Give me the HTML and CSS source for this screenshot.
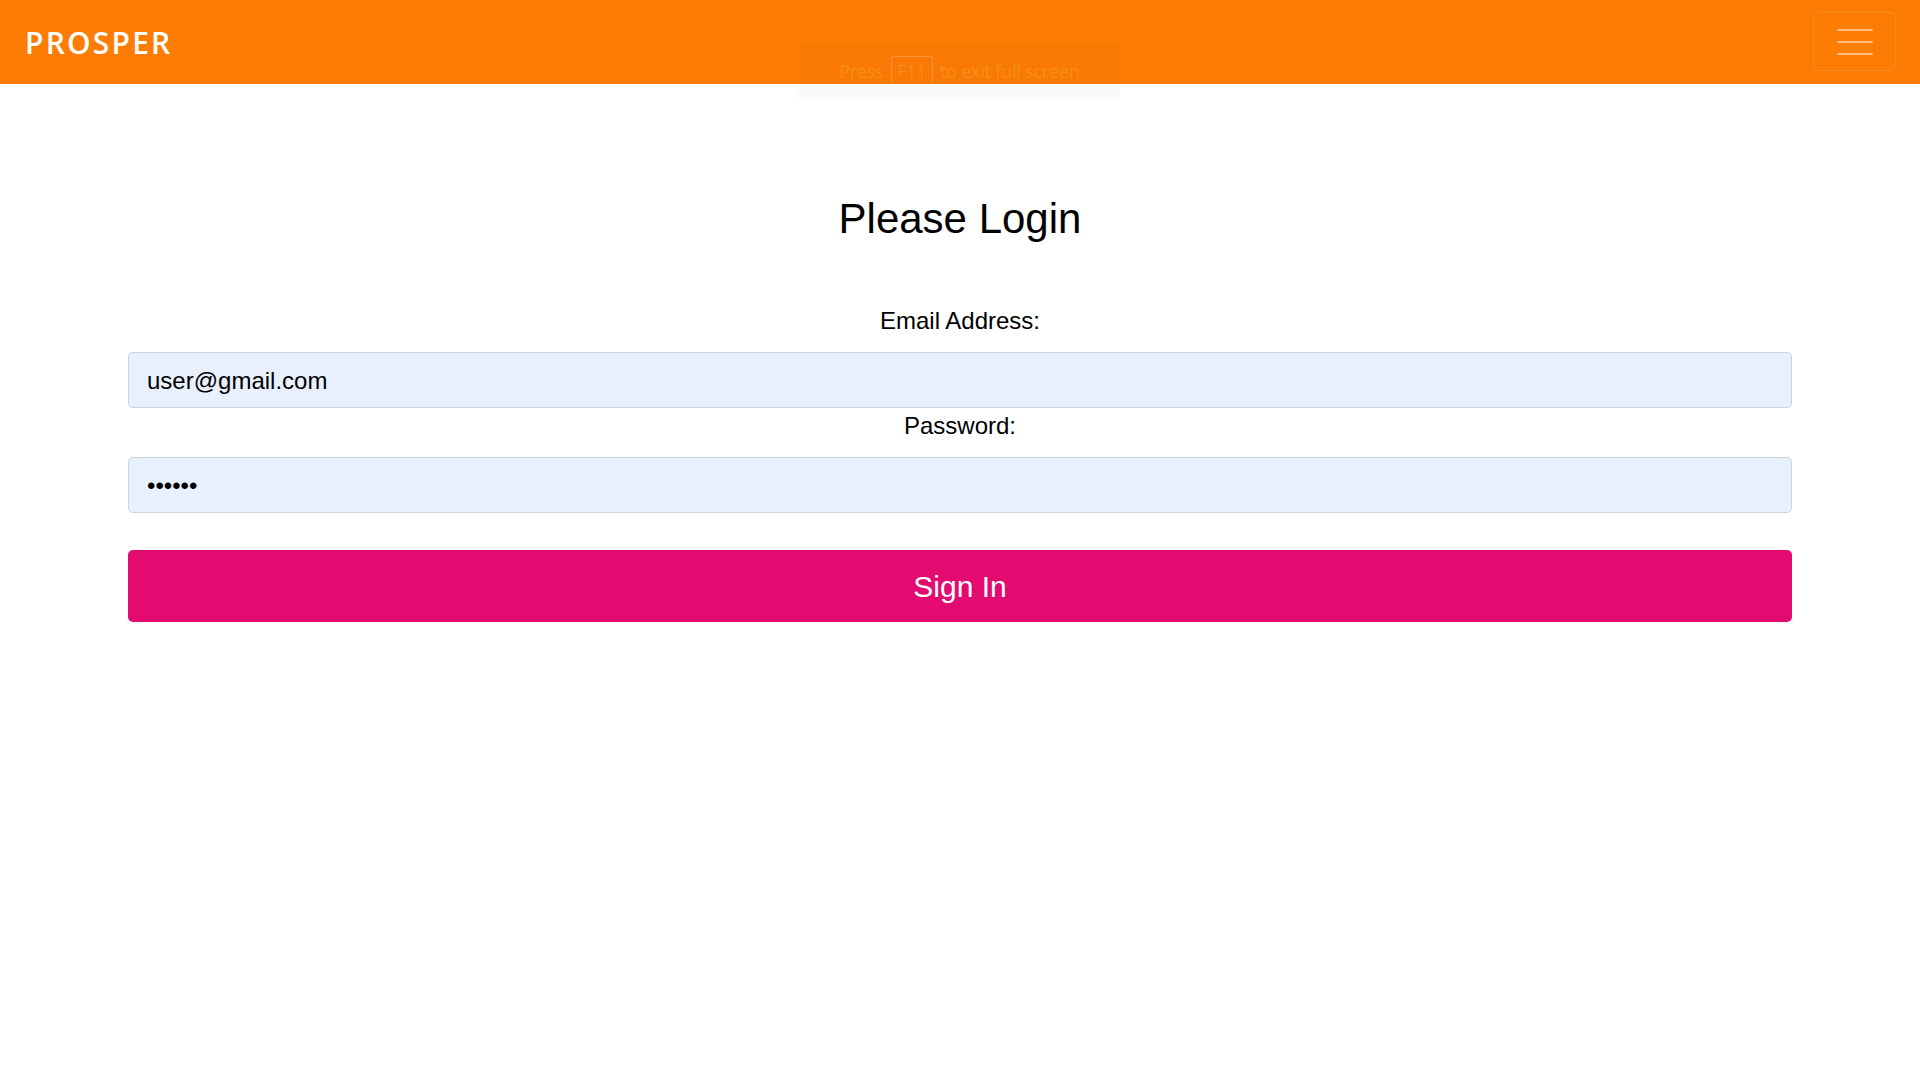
FILE: index.html
```html
<!DOCTYPE html>
<html lang="en">
<head>
<meta charset="utf-8">
<title>Prosper - Login</title>
<link rel="stylesheet" href="styles.css">
</head>
<body>
<header class="navbar">
  <a class="brand" href="#">PROSPER</a>
  <button class="toggler" type="button" aria-label="Toggle navigation">
    <span class="bar"></span>
    <span class="bar"></span>
    <span class="bar"></span>
  </button>
</header>
<div class="fs-notice"><span>Press</span><span class="key">F11</span><span>to exit full screen</span></div>
<main class="login">
  <h1 class="title">Please Login</h1>
  <form class="form">
    <label class="label" for="email">Email Address:</label>
    <input class="input" id="email" type="email" value="user@gmail.com">
    <label class="label" for="pw">Password:</label>
    <input class="input" id="pw" type="password" value="secret">
    <button class="submit" type="button">Sign In</button>
  </form>
</main>
</body>
</html>
```
FILE: styles.css
```css
* { box-sizing: border-box; }
html, body { margin: 0; padding: 0; }
body {
  font-family: "Liberation Sans", Arial, sans-serif;
  background: #ffffff;
  color: #000;
}
.navbar {
  height: 84px;
  background: #fd7c04;
  display: flex;
  align-items: center;
  justify-content: space-between;
  padding: 0 25px 0 25px;
}
.brand {
  font-family: "Open Sans", sans-serif;
  font-weight: 600;
  font-size: 30px;
  letter-spacing: 2.2px;
  color: #fff;
  text-decoration: none;
  line-height: 1;
  margin-top: 1px;
}
.toggler {
  width: 83px;
  height: 59px;
  background: transparent;
  border: 1px solid rgba(255,255,255,0.12);
  border-radius: 5px;
  display: flex;
  flex-direction: column;
  align-items: center;
  justify-content: center;
  gap: 10px;
  padding: 0;
  margin-right: -1px;
  margin-top: -1px;
}
.toggler .bar {
  display: block;
  width: 36px;
  height: 2px;
  background: rgba(255,255,255,0.5);
  border-radius: 1px;
}
.fs-notice {
  position: absolute;
  top: 45px;
  left: 799px;
  width: 321px;
  height: 53px;
  background: rgba(0,0,0,0.02);
  font-family: "Open Sans", sans-serif;
  font-size: 18px;
  letter-spacing: -0.2px;
  color: rgba(255,190,90,0.3);
  display: flex;
  align-items: center;
  justify-content: center;
  gap: 7px;
  padding-bottom: 2px;
  white-space: nowrap;
}
.fs-notice .key {
  display: inline-flex;
  align-items: center;
  justify-content: center;
  width: 42px;
  height: 36px;
  border: 1px solid rgba(255,255,255,0.2);
  border-radius: 3px;
  margin-top: 6px;
  padding-bottom: 6px;
}
.login {
  padding: 110px 128px 0 128px;
  text-align: center;
}
.title {
  font-weight: 400;
  font-size: 42px;
  line-height: 50px;
  margin: 0 0 59px 0;
}
.form {
  display: flex;
  flex-direction: column;
}
.label {
  font-size: 24px;
  line-height: 36px;
  margin-bottom: 13px;
}
.input {
  height: 56px;
  width: 100%;
  background: #e8f0fe;
  border: 1px solid #cfd4dc;
  border-radius: 5px;
  font-family: "Liberation Sans", Arial, sans-serif;
  font-size: 24px;
  color: #000;
  padding: 2px 18px 0 18px;
  margin: 0;
}
.submit {
  margin-top: 37px;
  height: 72px;
  width: 100%;
  background: #e30b6f;
  border: none;
  border-radius: 5px;
  color: #fff;
  font-family: "Liberation Sans", Arial, sans-serif;
  font-size: 30px;
  padding-top: 2px;
}
```
